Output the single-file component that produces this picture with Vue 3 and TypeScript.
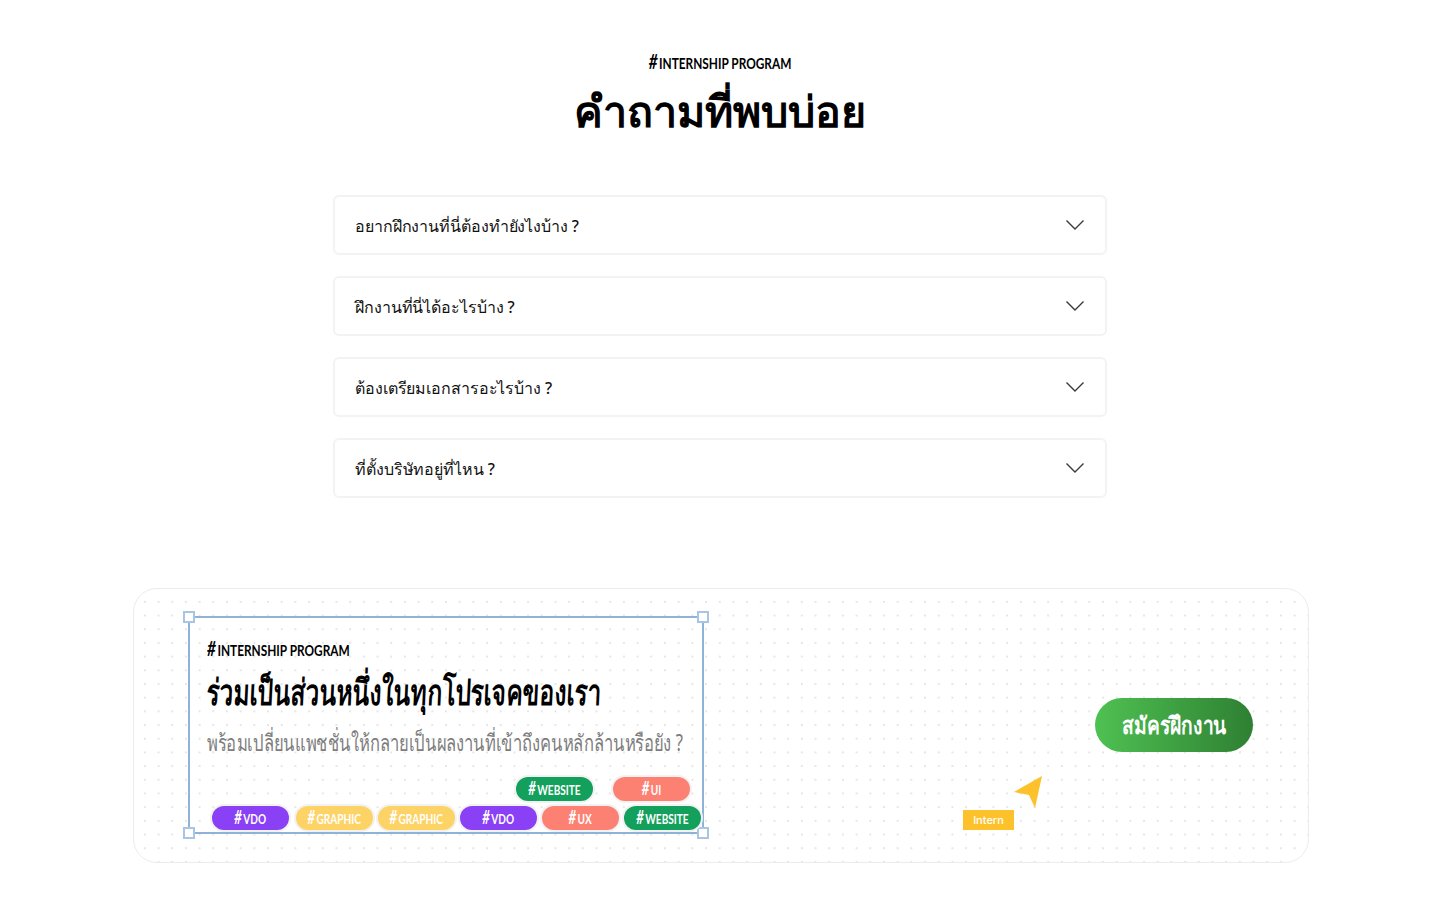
<script setup lang="ts">
const questions: string[] = [
  'อยากฝึกงานที่นี่ต้องทำยังไงบ้าง ?',
  'ฝึกงานที่นี่ได้อะไรบ้าง ?',
  'ต้องเตรียมเอกสารอะไรบ้าง ?',
  'ที่ตั้งบริษัทอยู่ที่ไหน ?',
]
interface Chip { label: string; kind: string }
const topChips: Chip[] = [
  { label: 'WEBSITE', kind: 'green' },
  { label: 'UI', kind: 'coral' },
]
const bottomChips: Chip[] = [
  { label: 'VDO', kind: 'purple' },
  { label: 'GRAPHIC', kind: 'yellow' },
  { label: 'GRAPHIC', kind: 'yellow' },
  { label: 'VDO', kind: 'purple' },
  { label: 'UX', kind: 'coral' },
  { label: 'WEBSITE', kind: 'green' },
]
</script>

<template>
  <main class="page">
    <header class="head">
      <p class="tag"><span class="hash">#</span>INTERNSHIP PROGRAM</p>
      <h1 class="title">คำถามที่พบบ่อย</h1>
    </header>

    <section class="faq">
      <div v-for="q in questions" :key="q" class="row">
        <span class="q">{{ q }}</span>
        <svg class="chev" width="20" height="12" viewBox="0 0 20 12" fill="none">
          <path d="M1.5 1.5 L10 10 L18.5 1.5" stroke="#3a3a3a" stroke-width="1.4" />
        </svg>
      </div>
    </section>

    <section class="banner">
      <div class="box">
        <i class="handle tl"></i><i class="handle tr"></i><i class="handle bl"></i><i class="handle br"></i>
        <p class="tag box-tag"><span class="hash">#</span>INTERNSHIP PROGRAM</p>
        <h2 class="box-title">ร่วมเป็นส่วนหนึ่งในทุกโปรเจคของเรา</h2>
        <p class="box-sub">พร้อมเปลี่ยนแพชชั่นให้กลายเป็นผลงานที่เข้าถึงคนหลักล้านหรือยัง ?</p>
        <div class="chips top">
          <span v-for="(c, i) in topChips" :key="i" class="chip" :class="c.kind"><span class="chip-text"><span class="hash">#</span>{{ c.label }}</span></span>
        </div>
        <div class="chips bottom">
          <span v-for="(c, i) in bottomChips" :key="i" class="chip" :class="c.kind"><span class="chip-text"><span class="hash">#</span>{{ c.label }}</span></span>
        </div>
      </div>

      <div class="side">
        <div class="cursor">
          <svg class="arrow" width="30" height="34" viewBox="0 0 30 34">
            <path d="M28 0 L21 32 L15 19 L0 16 Z" fill="#fdc12b" />
          </svg>
          <span class="intern">Intern</span>
        </div>
        <button class="cta"><span class="cta-text">สมัครฝึกงาน</span></button>
      </div>
    </section>
  </main>
</template>

<style>
html, body { margin: 0; background: #fff; }
</style>

<style scoped>
.page {
  width: 1440px;
  height: 900px;
  box-sizing: border-box;
  padding-top: 51px;
  display: flex;
  flex-direction: column;
  align-items: center;
  font-family: "Noto Sans", "Liberation Sans", sans-serif;
  color: #000;
  overflow: hidden;
}
.head { text-align: center; }
.tag {
  margin: 0;
  font-family: Lato, "Liberation Sans", sans-serif;
  font-weight: 700;
  font-size: 16px;
  line-height: 22px;
  transform: scaleX(0.74);
}
.hash { font-style: italic; font-size: 1.3em; margin-right: 2px; line-height: 1; }
.title {
  margin: 11px 0 0;
  font-size: 43px;
  line-height: 52px;
  font-weight: 700;
}
.faq {
  margin-top: 58px;
  width: 774px;
  display: flex;
  flex-direction: column;
  gap: 21px;
}
.row {
  height: 60px;
  box-sizing: border-box;
  border: 2px solid #f3f3f3;
  border-radius: 6px;
  display: flex;
  align-items: center;
  justify-content: space-between;
  padding: 0 20px 0 20px;
}
.q { font-size: 16px; font-weight: 500; color: #111; padding-top: 2px; letter-spacing: -0.1px; }
.banner {
  align-self: flex-start;
  margin: 90px 0 0 133px;
  width: 1176px;
  height: 275px;
  box-sizing: border-box;
  border: 1px solid #ececec;
  border-radius: 24px;
  padding: 27px 55px 28px 54px;
  display: flex;
  justify-content: space-between;
  background-color: #fff;
  background-image: radial-gradient(circle, #e6e6e6 0.8px, transparent 1.2px);
  background-size: 13.7px 13.7px;
  background-position: 4px 6px;
}
.box {
  position: relative;
  width: 516px;
  height: 218px;
  box-sizing: border-box;
  border: 2px solid #8fb2d6;
  padding: 20px 17px 0;
  display: flex;
  flex-direction: column;
}
.handle {
  position: absolute;
  width: 8px;
  height: 8px;
  background: #fff;
  border: 2px solid #a8c6e4;
}
.tl { left: -7px; top: -7px; }
.tr { right: -7px; top: -7px; }
.bl { left: -7px; bottom: -7px; }
.br { right: -7px; bottom: -7px; }
.box-tag { transform-origin: left center; }
.box-title {
  margin: 7px 0 0;
  font-size: 36px;
  line-height: 48px;
  font-weight: 700;
  white-space: nowrap;
  transform: scaleX(0.68) skewX(-4deg);
  transform-origin: left center;
}
.box-sub {
  margin: 11px 0 0;
  font-size: 23px;
  line-height: 30px;
  color: #7d7d7d;
  white-space: nowrap;
  transform: scaleX(0.72);
  transform-origin: left center;
}
.chips { display: flex; position: absolute; }
.top { right: 12px; top: 159px; gap: 20px; }
.bottom { left: 22px; top: 188px; gap: 5px; }
.bottom .chip:first-child { margin-right: 2px; }
.chip {
  width: 77px;
  height: 24px;
  border-radius: 12px;
  box-shadow: 0 0 0 2px #f2f2f2;
  color: #fff;
  font-family: Lato, "Liberation Sans", sans-serif;
  font-weight: 700;
  font-size: 14px;
  display: flex;
  align-items: center;
  justify-content: center;
}
.chip-text {
  display: inline-block;
  white-space: nowrap;
  transform: scaleX(0.72);
  margin-top: -1px;
}
.green { background: #12a05c; }
.coral { background: #fd8173; }
.purple { background: #8a41f5; }
.yellow { background: #fdd366; }
.side {
  position: relative;
  flex: 1;
  display: flex;
  justify-content: flex-end;
  align-items: flex-start;
}
.cta {
  margin-top: 82px;
  width: 158px;
  height: 54px;
  border: 0;
  border-radius: 27px;
  background: linear-gradient(90deg, #4fc152, #2e8032);
  color: #fff;
  font-family: inherit;
  font-size: 24px;
  font-weight: 600;
  padding: 0;
}
.cta-text { display: inline-block; transform: scaleX(0.8); white-space: nowrap; }
.cursor {
  position: absolute;
  left: 258px;
  top: 160px;
  width: 80px;
  height: 60px;
}
.arrow { position: absolute; left: 52px; top: 0; }
.intern {
  position: absolute;
  left: 1px;
  top: 34px;
  width: 51px;
  height: 20px;
  background: #fdc12b;
  color: #fff;
  font-family: Inter, sans-serif;
  font-size: 11px;
  font-weight: 500;
  line-height: 20px;
  text-align: center;
}
</style>
